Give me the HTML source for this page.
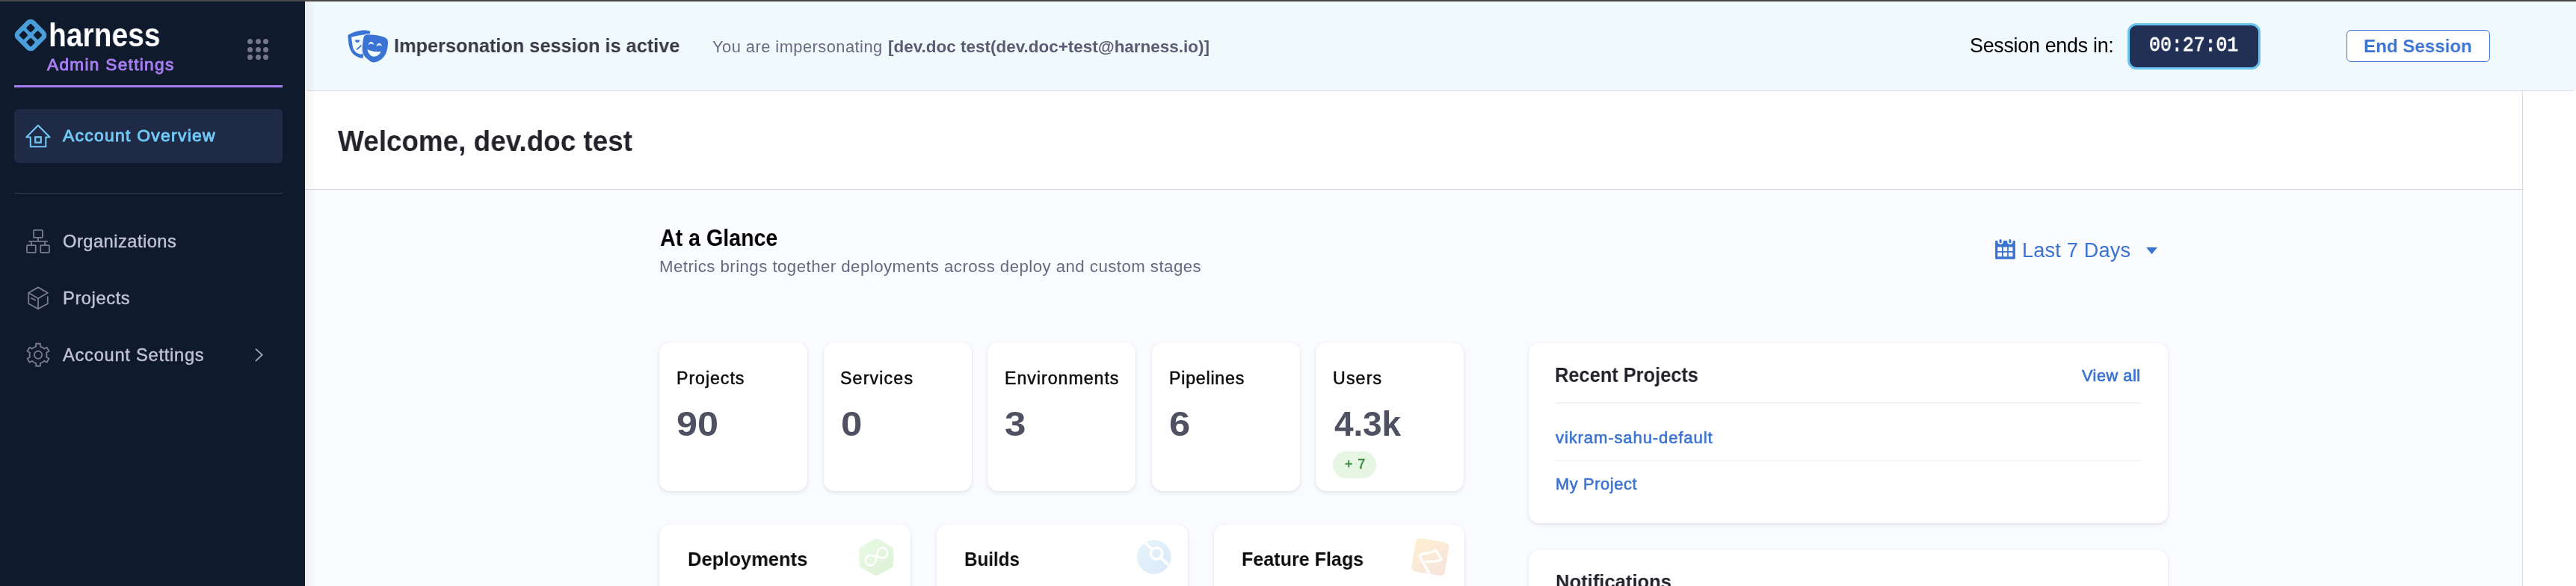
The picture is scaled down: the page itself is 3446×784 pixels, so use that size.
<!DOCTYPE html>
<html><head><meta charset="utf-8"><title>Harness - Account Overview</title>
<style>
*{margin:0;padding:0;box-sizing:border-box}
html,body{width:3446px;height:784px;overflow:hidden;background:#ffffff;font-family:"Liberation Sans",sans-serif;-webkit-font-smoothing:antialiased}
.a{position:absolute}
.t{position:absolute;white-space:pre;will-change:transform;font-family:"Liberation Sans",sans-serif}
.m{font-family:"Liberation Mono",monospace}
#topline{left:0;top:0;width:3446px;height:2px;background:#474747}
#sidebar{left:0;top:2px;width:408px;height:782px;background:#0f1a2d}
#purple{left:19px;top:114px;width:359px;height:3px;background:#a87ff3}
#active{left:19px;top:146px;width:359px;height:72px;border-radius:6px;background:#1f2b46}
#divider{left:19px;top:258px;width:359px;height:1px;background:#353b4f}
.dot{position:absolute;width:7px;height:7px;border-radius:50%;background:#76778c}
#banner{left:408px;top:2px;width:3038px;height:120px;background:#f0f9fc;border-top:1px solid #ffffff;border-left:1px solid #ffffff;border-bottom:1px solid #d9dae5;border-radius:0 0 6px 6px}
#header{left:408px;top:122px;width:2966px;height:132px;background:#ffffff;border-bottom:1px solid #d9dae5}
#content{left:408px;top:254px;width:2966px;height:530px;background:#fafbfe}
#vline{left:3374px;top:122px;width:1px;height:662px;background:#d9dae5}
#shadow{left:408px;top:2px;width:14px;height:782px;background:linear-gradient(to right,rgba(20,20,40,0.06),rgba(20,20,40,0))}
#timer{left:2846px;top:31px;width:178px;height:62px;border-radius:12px;background:#213054;border:3px solid #6ac5f2}
#endbtn-box{left:3139px;top:40px;width:192px;height:43px;border-radius:6px;background:#ffffff;border:1.5px solid #3b73d1}
.card{position:absolute;background:#ffffff;border-radius:14px;box-shadow:0 0 1px rgba(40,41,61,0.08),0 2px 5px rgba(96,97,112,0.15)}
#badge-box{left:1783px;top:604px;width:58px;height:36px;border-radius:18px;background:#e6f6e3}
.rule{position:absolute;height:1px;background:#eeeff4}
</style></head><body>
<div class="a" id="sidebar"></div>
<div class="a" id="topline"></div>
<!-- logo -->
<svg class="a" style="left:15.9px;top:21.8px" width="50" height="50" viewBox="0 0 50 50">
  <g transform="rotate(45 25 25)">
    <rect x="7.70" y="7.70" width="34.60" height="34.60" rx="7.50" fill="#4a9fdb"/>
    <rect x="13.80" y="13.80" width="8.90" height="8.90" rx="1.8" fill="#0f1a2d"/>
    <rect x="27.30" y="13.80" width="8.90" height="8.90" rx="1.8" fill="#0f1a2d"/>
    <rect x="13.80" y="27.30" width="8.90" height="8.90" rx="1.8" fill="#0f1a2d"/>
    <rect x="27.30" y="27.30" width="8.90" height="8.90" rx="1.8" fill="#0f1a2d"/>
  </g>
</svg>
<div class="dot" style="left:331.3px;top:52.2px"></div><div class="dot" style="left:341.6px;top:52.2px"></div><div class="dot" style="left:351.9px;top:52.2px"></div>
<div class="dot" style="left:331.3px;top:62.6px"></div><div class="dot" style="left:341.6px;top:62.6px"></div><div class="dot" style="left:351.9px;top:62.6px"></div>
<div class="dot" style="left:331.3px;top:72.8px"></div><div class="dot" style="left:341.6px;top:72.8px"></div><div class="dot" style="left:351.9px;top:72.8px"></div>
<div class="a" id="purple"></div>
<div class="a" id="active"></div>
<div class="a" id="divider"></div>
<!-- house icon (zoom coords of region 28,160 48x44) -->
<svg class="a" style="left:28px;top:160px" width="48" height="44" viewBox="0 0 639 586" fill="none" stroke="#72c9f7">
  <path d="M96 312 L305 104 L514 312 L443 312 L443 482 L170 482 L170 312 Z" stroke-width="27" stroke-linejoin="round"/>
  <rect x="256" y="311" width="100" height="98" stroke-width="30"/>
</svg>
<!-- org icon (region 25,295 70x70) -->
<svg class="a" style="left:25px;top:295px" width="70" height="70" viewBox="0 0 586 586" fill="none" stroke="#7a7b90" stroke-width="15">
  <rect x="167.5" y="107.5" width="100" height="84" rx="8"/>
  <path d="M217.5 191.5 V233 M110 233 H325 M141.5 233 V277.5 M293.5 233 V277.5"/>
  <rect x="92.5" y="277.5" width="98" height="82" rx="8"/>
  <rect x="244.5" y="277.5" width="98" height="82" rx="8"/>
</svg>
<!-- box icon (region 25,365 70x70) -->
<svg class="a" style="left:25px;top:365px" width="70" height="70" viewBox="0 0 586 586" fill="none" stroke="#7a7b90" stroke-width="15" stroke-linejoin="round" stroke-linecap="round">
  <path d="M325 224 L218 162 L111 224 L111 345 L218 404 L325 345 L325 270"/>
  <path d="M113 226 L218 287 L322 226 M218 287 V402"/>
  <path d="M143 284 L186 306"/>
</svg>
<!-- gear icon (region 25,440 70x70) -->
<svg class="a" style="left:25px;top:440px" width="70" height="70" viewBox="0 0 586 586" fill="none" stroke="#7a7b90" stroke-width="15" stroke-linejoin="round">
  <path d="M174.4 205.5 L193.2 198.3 L193.6 165.4 L242.4 165.4 L242.8 198.3 L261.6 205.5 L270.3 210.5 L285.9 223.1 L314.6 207.0 L339.0 249.3 L310.7 266.2 L313.9 286.0 L313.9 296.0 L310.7 315.8 L339.0 332.7 L314.6 375.0 L285.9 358.9 L270.3 371.5 L261.6 376.5 L242.8 383.7 L242.4 416.6 L193.6 416.6 L193.2 383.7 L174.4 376.5 L165.7 371.5 L150.1 358.9 L121.4 375.0 L97.0 332.7 L125.3 315.8 L122.1 296.0 L122.1 286.0 L125.3 266.2 L97.0 249.3 L121.4 207.0 L150.1 223.1 L165.7 210.5 Z"/>
  <circle cx="218" cy="291" r="43"/>
</svg>
<!-- chevron -->
<svg class="a" style="left:320px;top:450px" width="60" height="60" viewBox="0 0 586 586" fill="none" stroke="#a3a4ba" stroke-width="18">
  <path d="M214 162 L300 242 L214 323"/>
</svg>

<div class="a" id="header"></div>
<div class="a" id="content"></div>
<div class="a" id="vline"></div>
<div class="a" id="banner"></div>
<div class="a" id="shadow"></div>
<!-- mask icon (region 455,30 80x70) -->
<svg class="a" style="left:455px;top:30px" width="80" height="70" viewBox="0 0 670 586">
  <path fill-rule="evenodd" fill="#3a73d3" d="M87 143 C90 200, 95 240, 101 265 C112 305, 125 330, 144 351 C180 385, 220 397, 252 401 L300 250 L338 100 C325 92, 290 86, 240 89 C190 92, 120 118, 87 143 Z M126 165 C160 155, 200 146, 273 136 L290 300 L237 358 C210 350, 190 345, 180 336 C160 315, 148 300, 144 286 C135 240, 130 200, 126 165 Z"/>
  <path d="M166 197 L220 197 C218 215, 205 226, 193 226 C180 226, 168 215, 166 197 Z" fill="#3a73d3"/>
  <path d="M191 301 L234 261" fill="none" stroke="#3a73d3" stroke-width="15" stroke-linecap="round"/>
  <path d="M275 149 C285 140, 292 137, 300 136 C360 134, 430 145, 489 163 C510 170, 530 185, 535 208 C537 240, 534 260, 531 281 C525 320, 515 345, 505 362 C480 400, 460 415, 443 425 C420 440, 395 448, 377 448 C355 448, 340 438, 325 425 C300 405, 280 390, 266 366 C252 340, 248 320, 249 300 C250 260, 253 220, 259 189 C262 170, 268 156, 275 149 Z" fill="#3a73d3" stroke="#f0f9fc" stroke-width="16"/>
  <path d="M275 149 C285 140, 292 137, 300 136 C360 134, 430 145, 489 163 C510 170, 530 185, 535 208 C537 240, 534 260, 531 281 C525 320, 515 345, 505 362 C480 400, 460 415, 443 425 C420 440, 395 448, 377 448 C355 448, 340 438, 325 425 C300 405, 280 390, 266 366 C252 340, 248 320, 249 300 C250 260, 253 220, 259 189 C262 170, 268 156, 275 149 Z" fill="#3a73d3"/>
  <path d="M318 254 C318 228, 335 218, 348 218 C362 218, 377 230, 377 254 C368 242, 358 238, 348 238 C338 238, 326 243, 318 254 Z M407 271 C407 245, 424 235, 438 235 C452 235, 469 247, 469 271 C460 259, 449 255, 438 255 C427 255, 415 260, 407 271 Z" fill="#f0f9fc"/>
  <path d="M305 300 C335 322, 400 332, 456 327 C445 360, 415 383, 378 383 C340 383, 312 345, 305 300 Z" fill="#f0f9fc"/>
</svg>
<div class="a" id="timer"></div>
<div class="a" id="endbtn-box"></div>

<!-- calendar icon (region 2664,316 38x34) -->
<svg class="a" style="left:2664px;top:316px" width="38" height="34" viewBox="0 0 655 586">
  <rect x="88" y="100" width="462" height="430" rx="22" fill="#3b73d1"/>
  <circle cx="209" cy="122" r="66" fill="#fafbfe"/>
  <circle cx="429" cy="122" r="66" fill="#fafbfe"/>
  <rect x="88" y="40" width="462" height="60" fill="#fafbfe"/>
  <rect x="183" y="68" width="52" height="92" rx="26" fill="#3b73d1"/>
  <rect x="403" y="68" width="52" height="92" rx="26" fill="#3b73d1"/>
  <g fill="#fafbfe">
  <rect x="143" y="250" width="97" height="95"/><rect x="273" y="250" width="92" height="95"/><rect x="395" y="250" width="95" height="95"/>
  <rect x="143" y="375" width="97" height="95"/><rect x="273" y="375" width="92" height="95"/><rect x="395" y="375" width="95" height="95"/>
  </g>
</svg>
<svg class="a" style="left:2870px;top:330px" width="17" height="11" viewBox="0 0 17 11">
  <path d="M1 1 H16 L8.5 10 Z" fill="#3b73d1"/>
</svg>

<!-- stat cards -->
<div class="card" style="left:882px;top:458px;width:198px;height:199px"></div>
<div class="card" style="left:1102px;top:458px;width:198px;height:199px"></div>
<div class="card" style="left:1321px;top:458px;width:198px;height:199px"></div>
<div class="card" style="left:1541px;top:458px;width:198px;height:199px"></div>
<div class="card" style="left:1760px;top:458px;width:198px;height:199px"></div>
<div class="a" id="badge-box"></div>

<!-- recent projects -->
<div class="card" style="left:2045px;top:459px;width:855px;height:241px"></div>
<div class="rule" style="left:2081px;top:538px;width:783px;height:2px;background:#f0f1f6"></div>
<div class="rule" style="left:2081px;top:616px;width:783px"></div>
<div class="card" style="left:2045px;top:736px;width:855px;height:100px"></div>

<!-- bottom cards -->
<div class="card" style="left:882px;top:702px;width:336px;height:120px"></div>
<div class="card" style="left:1253px;top:702px;width:336px;height:120px"></div>
<div class="card" style="left:1624px;top:702px;width:335px;height:120px"></div>
<!-- deployments icon (region 1140,710 70x70) -->
<svg class="a" style="left:1140px;top:710px" width="70" height="70" viewBox="0 0 586 586">
  <defs><linearGradient id="gg" x1="0" y1="0" x2="1" y2="1"><stop offset="0" stop-color="#e9f9e3"/><stop offset="1" stop-color="#ddf2d8"/></linearGradient></defs>
  <path d="M270 118 L430 208 L430 385 L270 475 L110 385 L110 208 Z" fill="url(#gg)" stroke="url(#gg)" stroke-width="60" stroke-linejoin="round"/>
  <path d="M216.4 277.4 L327.6 302.6 A56 56 0 1 0 285.6 234.6 L258.4 345.4 A56 56 0 1 1 216.4 277.4 Z" fill="none" stroke="#ffffff" stroke-width="22" stroke-linejoin="round"/>
</svg>
<!-- builds icon (region 1510,710 70x70) -->
<svg class="a" style="left:1510px;top:710px" width="70" height="70" viewBox="0 0 586 586">
  <defs><linearGradient id="bg" x1="0" y1="0" x2="1" y2="1"><stop offset="0" stop-color="#e7f4fb"/><stop offset="1" stop-color="#dbe9f9"/></linearGradient>
  <clipPath id="bc"><circle cx="283" cy="295" r="190"/></clipPath></defs>
  <circle cx="283" cy="295" r="190" fill="url(#bg)"/>
  <g clip-path="url(#bc)" stroke="#ffffff" stroke-width="30" fill="none">
  <circle cx="310" cy="255" r="64"/>
  <path d="M150 100 L262 208 M358 302 L480 420"/>
  </g>
</svg>
<!-- feature flags icon (region 1880,712 66x66) -->
<svg class="a" style="left:1880px;top:712px" width="66" height="66" viewBox="0 0 586 586">
  <defs><linearGradient id="fg" x1="0" y1="0" x2="1" y2="1"><stop offset="0" stop-color="#fdf0d0"/><stop offset="1" stop-color="#f8e3dd"/></linearGradient></defs>
  <g transform="rotate(9 295 295)"><rect x="95" y="95" width="400" height="400" rx="52" fill="url(#fg)"/></g>
  <path d="M285 492 L168 282 C210 232, 290 268, 358 212 L428 322 C360 372, 290 334, 236 352" fill="none" stroke="#ffffff" stroke-width="28" stroke-linejoin="round"/>
</svg>
<div class="t" id="t-harness" style="left:64.85px;top:24.62px;font-size:44.16px;line-height:44.16px;font-weight:700;color:#ffffff;transform:scaleX(0.8829);transform-origin:0 0">harness</div>
<div class="t" id="t-admin" style="left:62.55px;top:76.37px;font-size:22.60px;line-height:22.60px;font-weight:400;color:#a87ff3;letter-spacing:1.326px;-webkit-text-stroke:0.90px #a87ff3">Admin Settings</div>
<div class="t" id="t-nav0" style="left:84.25px;top:170.33px;font-size:22.89px;line-height:22.89px;font-weight:400;color:#72c9f7;letter-spacing:1.285px;-webkit-text-stroke:0.90px #72c9f7">Account Overview</div>
<div class="t" id="t-nav1" style="left:83.80px;top:312.18px;font-size:23.69px;line-height:23.69px;font-weight:400;color:#c2c3d6;letter-spacing:0.474px;-webkit-text-stroke:0.40px #c2c3d6">Organizations</div>
<div class="t" id="t-nav2" style="left:83.80px;top:388.38px;font-size:23.69px;line-height:23.69px;font-weight:400;color:#c2c3d6;letter-spacing:0.582px;-webkit-text-stroke:0.40px #c2c3d6">Projects</div>
<div class="t" id="t-nav3" style="left:84.20px;top:464.27px;font-size:23.69px;line-height:23.69px;font-weight:400;color:#c2c3d6;letter-spacing:0.726px;-webkit-text-stroke:0.40px #c2c3d6">Account Settings</div>
<div class="t" id="t-imp" style="left:527.15px;top:47.90px;font-size:26.60px;line-height:26.60px;font-weight:700;color:#383946;transform:scaleX(0.9510);transform-origin:0 0">Impersonation session is active</div>
<div class="t" id="t-you" style="left:953.10px;top:51.80px;font-size:21.80px;line-height:21.80px;font-weight:400;color:#686a82;letter-spacing:0.491px">You are impersonating</div>
<div class="t" id="t-who" style="left:1187.94px;top:52.10px;font-size:21.20px;line-height:21.20px;font-weight:700;color:#5a5c73;transform:scaleX(1.0605);transform-origin:0 0">[dev.doc test(dev.doc+test@harness.io)]</div>
<div class="t" id="t-sess" style="left:2635.30px;top:47.85px;font-size:26.89px;line-height:26.89px;font-weight:400;color:#000000;letter-spacing:-0.296px">Session ends in:</div>
<div class="t m" id="t-timer" style="left:2874.89px;top:47.39px;font-size:27.30px;line-height:27.30px;font-weight:400;color:#ffffff;transform:scaleX(0.9100);transform-origin:0 0;-webkit-text-stroke:0.80px #ffffff">00:27:01</div>
<div class="t" id="t-endbtn" style="left:3162.01px;top:49.96px;font-size:24.27px;line-height:24.27px;font-weight:700;color:#3b73d1;transform:scaleX(0.9944);transform-origin:0 0">End Session</div>
<div class="t" id="t-welcome" style="left:451.50px;top:169.58px;font-size:38.23px;line-height:38.23px;font-weight:700;color:#22222a;transform:scaleX(0.9644);transform-origin:0 0">Welcome, dev.doc test</div>
<div class="t" id="t-glance" style="left:882.50px;top:303.50px;font-size:30.81px;line-height:30.81px;font-weight:700;color:#000000;transform:scaleX(0.9284);transform-origin:0 0">At a Glance</div>
<div class="t" id="t-metrics" style="left:882.40px;top:345.78px;font-size:22.24px;line-height:22.24px;font-weight:400;color:#666980;letter-spacing:0.456px">Metrics brings together deployments across deploy and custom stages</div>
<div class="t" id="t-last7" style="left:2704.80px;top:321.31px;font-size:27.18px;line-height:27.18px;font-weight:400;color:#3b73d1;letter-spacing:0.171px">Last 7 Days</div>
<div class="t" id="t-l0" style="left:905.15px;top:495.36px;font-size:23.18px;line-height:23.18px;font-weight:400;color:#0b0b0d;letter-spacing:0.955px;-webkit-text-stroke:0.50px #0b0b0d">Projects</div>
<div class="t" id="t-l1" style="left:1124.25px;top:495.36px;font-size:23.18px;line-height:23.18px;font-weight:400;color:#0b0b0d;letter-spacing:1.162px;-webkit-text-stroke:0.50px #0b0b0d">Services</div>
<div class="t" id="t-l2" style="left:1343.95px;top:495.36px;font-size:23.18px;line-height:23.18px;font-weight:400;color:#0b0b0d;letter-spacing:0.974px;-webkit-text-stroke:0.50px #0b0b0d">Environments</div>
<div class="t" id="t-l3" style="left:1563.55px;top:495.36px;font-size:23.18px;line-height:23.18px;font-weight:400;color:#0b0b0d;letter-spacing:0.781px;-webkit-text-stroke:0.50px #0b0b0d">Pipelines</div>
<div class="t" id="t-l4" style="left:1783.05px;top:495.36px;font-size:23.18px;line-height:23.18px;font-weight:400;color:#0b0b0d;letter-spacing:1.144px;-webkit-text-stroke:0.50px #0b0b0d">Users</div>
<div class="t" id="t-n0" style="left:905.40px;top:544.10px;font-size:46.00px;line-height:46.00px;font-weight:700;color:#4f5162;transform:scaleX(1.0950);transform-origin:0 0">90</div>
<div class="t" id="t-n1" style="left:1124.69px;top:544.10px;font-size:46.00px;line-height:46.00px;font-weight:700;color:#4f5162;transform:scaleX(1.1087);transform-origin:0 0">0</div>
<div class="t" id="t-n2" style="left:1344.29px;top:544.10px;font-size:46.00px;line-height:46.00px;font-weight:700;color:#4f5162;transform:scaleX(1.1087);transform-origin:0 0">3</div>
<div class="t" id="t-n3" style="left:1563.90px;top:544.10px;font-size:46.00px;line-height:46.00px;font-weight:700;color:#4f5162;transform:scaleX(1.1043);transform-origin:0 0">6</div>
<div class="t" id="t-n4" style="left:1785.20px;top:544.10px;font-size:46.00px;line-height:46.00px;font-weight:700;color:#4f5162;letter-spacing:-0.149px">4.3k</div>
<div class="t" id="t-badge" style="left:1798.85px;top:611.96px;font-size:17.98px;line-height:17.98px;font-weight:400;color:#34863a;letter-spacing:0.857px;-webkit-text-stroke:0.50px #34863a">+ 7</div>
<div class="t" id="t-recent" style="left:2080.38px;top:488.26px;font-size:27.47px;line-height:27.47px;font-weight:700;color:#22222a;transform:scaleX(0.9242);transform-origin:0 0">Recent Projects</div>
<div class="t" id="t-viewall" style="left:2784.65px;top:492.34px;font-size:21.73px;line-height:21.73px;font-weight:400;color:#3b73d1;letter-spacing:0.526px;-webkit-text-stroke:0.70px #3b73d1">View all</div>
<div class="t" id="t-p0" style="left:2081.40px;top:575.13px;font-size:22.10px;line-height:22.10px;font-weight:400;color:#3b73d1;letter-spacing:0.863px;-webkit-text-stroke:0.60px #3b73d1">vikram-sahu-default</div>
<div class="t" id="t-p1" style="left:2081.30px;top:637.28px;font-size:21.80px;line-height:21.80px;font-weight:400;color:#3b73d1;letter-spacing:0.623px;-webkit-text-stroke:0.60px #3b73d1">My Project</div>
<div class="t" id="t-dep" style="left:919.64px;top:734.90px;font-size:26.60px;line-height:26.60px;font-weight:700;color:#0b0b0d;transform:scaleX(0.9600);transform-origin:0 0">Deployments</div>
<div class="t" id="t-builds" style="left:1290.29px;top:734.90px;font-size:26.60px;line-height:26.60px;font-weight:700;color:#0b0b0d;transform:scaleX(0.9098);transform-origin:0 0">Builds</div>
<div class="t" id="t-ff" style="left:1661.06px;top:735.00px;font-size:26.60px;line-height:26.60px;font-weight:700;color:#0b0b0d;transform:scaleX(0.9438);transform-origin:0 0">Feature Flags</div>
<div class="t" id="t-notif" style="left:2081.24px;top:764.80px;font-size:26.60px;line-height:26.60px;font-weight:700;color:#22222a;transform:scaleX(0.9620);transform-origin:0 0">Notifications</div>
</body></html>
